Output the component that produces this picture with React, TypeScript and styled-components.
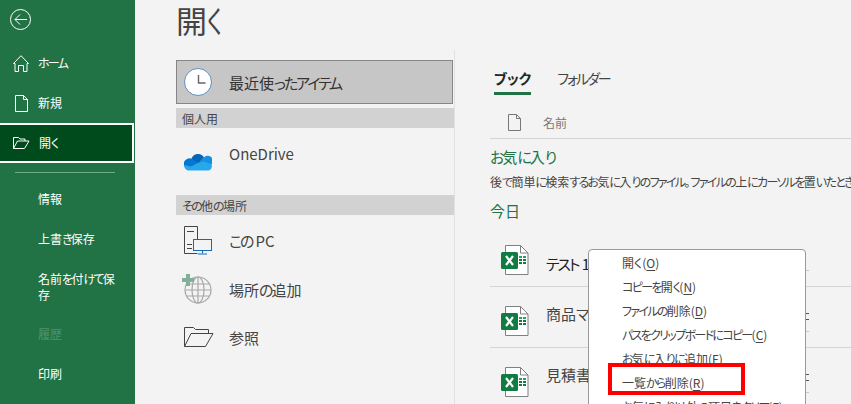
import React from "react";
import styled, { createGlobalStyle } from "styled-components";

const GlobalStyle = createGlobalStyle`
  html, body {
    margin: 0;
    padding: 0;
    background: #f3f3f3;
    overflow: hidden;
  }
  * {
    box-sizing: border-box;
  }
`;

const FONT = `"Noto Sans CJK JP", "Noto Sans", sans-serif`;

const Page = styled.div`
  position: relative;
  display: flex;
  width: 851px;
  height: 404px;
  overflow: hidden;
  background: #f3f3f3;
  font-family: ${FONT};
  font-feature-settings: "palt";
  color: #333;
`;

// the UI font of the reference has much narrower kana than kanji
const Kana = styled.span`
  letter-spacing: -0.14em;
`;

const Jp = ({ children }: { children: string }) => (
  <>{children.split(/([\u3040-\u30ff]+)/).map((part, i) => (i % 2 ? <Kana key={i}>{part}</Kana> : part))}</>
);

const Sidebar = styled.nav`
  flex: 0 0 135px;
  height: 404px;
  padding-top: 9px;
  background: #217346;
  color: #fff;
  font-size: 12px;
`;

const BackButton = styled.div`
  height: 34px;
  padding-left: 10px;
`;

const NavItem = styled.div<{ $active?: boolean; $disabled?: boolean; $tall?: boolean }>`
  display: flex;
  align-items: center;
  width: 134px;
  height: ${(p) => (p.$tall ? "55px" : "40px")};
  padding-left: 13px;
  gap: 9px;
  line-height: 16px;
  color: ${(p) => (p.$disabled ? "#4f9470" : "#fff")};
  ${(p) =>
    p.$active &&
    `
    margin-left: -2px;
    width: 136px;
    background: #004b1c;
    border: 2px solid #fff;
  `}
`;

const NavIcon = styled.span`
  display: flex;
  flex: 0 0 16px;
  justify-content: center;
`;

const NavLabel = styled.span`
  margin-left: 25px;
  width: 80px;
`;

const NavDivider = styled.div`
  width: 100px;
  height: 1px;
  margin: 9px 0 6px 15px;
  background: #6bab88;
`;

const Content = styled.main`
  flex: 1;
  display: flex;
  flex-direction: column;
  min-width: 0;
`;

const Title = styled.h1`
  margin: 0;
  height: 60px;
  padding: 0 0 0 41px;
  font-size: 31px;
  font-weight: 400;
  line-height: 40px;
  color: #444;
`;

const TitleKana = styled.span`
  display: inline-block;
  transform: scaleX(0.72);
  transform-origin: left center;
`;

const Columns = styled.div`
  display: flex;
  flex: 1;
  min-height: 0;
`;

const Places = styled.section`
  flex: 0 0 279px;
  margin-left: 41px;
  margin-top: -10px;
  padding-top: 10px;
  border-right: 1px solid #e1e1e1;
`;

const PlaceActive = styled.div`
  display: flex;
  align-items: center;
  width: 277px;
  height: 44px;
  padding-left: 7px;
  gap: 17px;
  font-size: 15px;
  background: #c6c6c6;
  border: 1px solid #868686;
  color: #333;
`;

const PlaceHeader = styled.div<{ $first?: boolean }>`
  display: flex;
  align-items: center;
  width: 278px;
  height: 20px;
  margin-top: ${(p) => (p.$first ? "4px" : "0")};
  padding-left: 6px;
  font-size: 12px;
  color: #444;
  background: #d2d2d2;
`;

const PlaceRow = styled.div<{ $h: number }>`
  display: flex;
  align-items: center;
  height: ${(p) => p.$h}px;
  padding-left: 8px;
  gap: 17px;
  font-size: 15px;
  color: #444;
`;

const PlaceIcon = styled.span<{ $outdent?: boolean }>`
  display: flex;
  flex: 0 0 28px;
  min-width: 0;

  svg {
    flex: none;
    margin-left: ${(p) => (p.$outdent ? "-2px" : "0")};
  }
`;

const RaisedLabel = styled.span`
  margin-bottom: 16px;
`;

const Files = styled.section`
  flex: 1;
  min-width: 0;
  margin-left: 35px;
  overflow: hidden;
`;

const Tabs = styled.div`
  display: flex;
  gap: 26px;
  height: 36px;
  margin: 8px 0 0 4px;
`;

const Tab = styled.div<{ $active?: boolean }>`
  height: 27px;
  font-size: 14px;
  line-height: 20px;
  font-weight: ${(p) => (p.$active ? 700 : 400)};
  color: ${(p) => (p.$active ? "#262626" : "#444")};
  border-bottom: 3px solid ${(p) => (p.$active ? "#217346" : "transparent")};
`;

const ColumnHead = styled.div`
  display: flex;
  align-items: center;
  gap: 22px;
  height: 35px;
  padding: 3px 0 0 18px;
  font-size: 12px;
  color: #777;
  border-bottom: 1px solid #d4d4d4;
`;

const GroupTitle = styled.div<{ $top: number }>`
  margin-top: ${(p) => p.$top}px;
  font-size: 15px;
  line-height: 20px;
  color: #217346;
`;

const GroupHint = styled.div`
  margin-top: 6px;
  font-size: 12px;
  line-height: 18px;
  color: #444;
  white-space: nowrap;
`;

const FileList = styled.div`
  margin-top: 5px;
`;

const FileRow = styled.div`
  position: relative;
  display: flex;
  align-items: center;
  height: 61px;
  padding: 8px 0 0 11px;
  gap: 17px;
  border-bottom: 1px solid #d4d4d4;
  white-space: nowrap;
`;

const FileName = styled.span<{ $hovered?: boolean }>`
  font-size: 15px;
  color: ${(p) => (p.$hovered ? "#222" : "#444")};
  margin-top: ${(p) => (p.$hovered ? "6px" : "0")};
  margin-bottom: ${(p) => (p.$hovered ? "0" : "16px")};
`;

/* ends of the hidden columns that peek out from behind the menu */
const RowTicks = styled.div<{ $dark?: boolean }>`
  position: absolute;
  left: 316px;
  bottom: 15px;
  width: 3px;
  height: 1px;
  background: #c8c8c8;

  &::before,
  &::after {
    content: "";
    position: absolute;
    left: 0;
    width: 3px;
    height: 1px;
    background: ${(p) => (p.$dark ? "#555" : "transparent")};
  }
  &::before {
    bottom: 18px;
  }
  &::after {
    bottom: 12px;
  }
`;

const Menu = styled.div`
  position: absolute;
  left: 588px;
  top: 249px;
  width: 218px;
  height: 170px;
  padding-top: 1px;
  background: #fff;
  border: 1px solid #999;
  border-radius: 4px;
`;

const MenuItem = styled.div`
  height: 24px;
  padding-left: 33px;
  font-size: 12px;
  line-height: 24px;
  color: #444;
  white-space: nowrap;

  u {
    text-underline-offset: 2px;
  }
`;

const RedFrame = styled.div`
  position: absolute;
  left: 608px;
  top: 363px;
  width: 137px;
  height: 32px;
  border: 4px solid #ff0000;
`;

const BackIcon = () => (
  <svg width="22" height="22" viewBox="0 0 22 22" fill="none" stroke="#fff" strokeWidth="1">
    <circle cx="10.5" cy="10.5" r="10" />
    <path d="M17 10.5H5M10 5.5l-5 5 5 5" />
  </svg>
);

const HomeIcon = () => (
  <svg width="16" height="17" viewBox="0 0 16 17" fill="none" stroke="#fff" strokeWidth="1">
    <path d="M.5 8.5 8 .7l7.5 7.8H14v8h-3.5v-6h-5v6H2v-8z" />
  </svg>
);

const DocIcon = ({ color }: { color: string }) => (
  <svg width="13" height="17" viewBox="0 0 13 17" fill="none" stroke={color} strokeWidth="1">
    <path d="M.5.5h8l4 4v12H.5z" />
    <path d="M8.5.5v4h4" />
  </svg>
);

const OpenIcon = () => (
  <svg width="17" height="12" viewBox="0 0 17 12" fill="none" stroke="#fff" strokeWidth="1">
    <path d="M.5 11.5V.5h5l1.5 1.5h5V4" />
    <path d="M.5 11.5h11L16 4H4.5L.5 11.5z" />
  </svg>
);

const ClockIcon = () => (
  <svg width="28" height="28" viewBox="0 0 28 28">
    <circle cx="14" cy="14" r="13.5" fill="#fff" stroke="#5a8fc8" />
    <path d="M14.5 7v8h7" fill="none" stroke="#666" strokeWidth="1.4" />
  </svg>
);

const CloudIcon = () => (
  <svg width="28" height="19" viewBox="0 0 28 19">
    <path d="M7.5 7A6.8 6.8 0 0 1 20 5.5L14 12z" fill="#0364b8" />
    <path d="M0 14A6 6 0 0 1 7.5 6.5L14 11l-9 6z" fill="#0078d4" />
    <path d="M19.5 6A5 5 0 0 1 28 12l-9 2-5-3z" fill="#1490df" />
    <path d="M.1 13c0 3.500 2.400 5.500 4.900 5.500h19c2 0 3.600-1.500 3.900-4 .1-.8 0-1.600-.3-2.300L20 9.500 14 11l-7 3.500z" fill="#28a8ea" />
  </svg>
);

const PcIcon = () => (
  <svg width="28" height="29" viewBox="0 0 28 29" fill="none">
    <path d="M13.5 13V.5H.5v27h13" stroke="#444" />
    <path d="M3 5.5h7M3 18.5h5M3 22.5h5" stroke="#444" />
    <rect x="9.5" y="13.5" width="18" height="11" stroke="#0f6cbd" fill="#f3f3f3" />
    <path d="M18.5 24.5v3M14 28h9" stroke="#0f6cbd" />
  </svg>
);

const GlobeIcon = () => (
  <svg width="30" height="30" viewBox="0 0 30 30" fill="none">
    <circle cx="16" cy="16" r="13" stroke="#a8a8a8" strokeWidth="1.2" />
    <ellipse cx="16" cy="16" rx="6" ry="13" stroke="#a8a8a8" strokeWidth="1.2" />
    <path d="M3 16h26M5 10h22M5 22h22M16 3v26" stroke="#a8a8a8" strokeWidth="1.2" />
    <path d="M4 0h4v4h4v4H8v4H4V8H0V4h4z" fill="#7fb09a" />
  </svg>
);

const FolderIcon = () => (
  <svg width="30" height="20" viewBox="0 0 30 20" fill="none" stroke="#444">
    <path d="M.5 19.5V.5h9l2 2h13v4" />
    <path d="M.5 19.5h21L29 6.5H7L.5 19.5z" />
  </svg>
);

const ExcelIcon = () => (
  <svg width="28" height="30" viewBox="0 0 28 30">
    <path d="M4.5 7V.5h15l7.5 7.5v21.5H4.5V24" fill="#fff" stroke="#808080" />
    <path d="M19.5.5V8H27" fill="none" stroke="#808080" />
    <rect x="0" y="7" width="17" height="17" rx="1.5" fill="#107c41" />
    <path d="M5 11l7 9M12 11l-7 9" stroke="#fff" strokeWidth="2.2" />
    <path d="M18 11h3v2h-3zM22 11h3v2h-3z" fill="#21a366" />
    <path d="M18 14h3v2h-3zM22 14h3v2h-3zM18 17h3v2h-3zM22 17h3v2h-3z" fill="#107c41" />
  </svg>
);

const App: React.FC = () => {
  return (
    <Page>
      <GlobalStyle />
      <Sidebar>
        <BackButton>
          <BackIcon />
        </BackButton>
        <NavItem>
          <NavIcon>
            <HomeIcon />
          </NavIcon>
          <span><Jp>ホーム</Jp></span>
        </NavItem>
        <NavItem>
          <NavIcon>
            <DocIcon color="#fff" />
          </NavIcon>
          <span>新規</span>
        </NavItem>
        <NavItem $active>
          <NavIcon>
            <OpenIcon />
          </NavIcon>
          <span>開く</span>
        </NavItem>
        <NavDivider />
        <NavItem>
          <NavLabel>情報</NavLabel>
        </NavItem>
        <NavItem>
          <NavLabel><Jp>上書き保存</Jp></NavLabel>
        </NavItem>
        <NavItem $tall>
          <NavLabel><Jp>名前を付けて保存</Jp></NavLabel>
        </NavItem>
        <NavItem $disabled>
          <NavLabel>履歴</NavLabel>
        </NavItem>
        <NavItem>
          <NavLabel>印刷</NavLabel>
        </NavItem>
      </Sidebar>
      <Content>
        <Title>開<TitleKana>く</TitleKana></Title>
        <Columns>
          <Places>
            <PlaceActive>
              <PlaceIcon>
                <ClockIcon />
              </PlaceIcon>
              <span><Jp>最近使ったアイテム</Jp></span>
            </PlaceActive>
            <PlaceHeader $first>個人用</PlaceHeader>
            <PlaceRow $h={67}>
              <PlaceIcon>
                <CloudIcon />
              </PlaceIcon>
              <RaisedLabel>OneDrive</RaisedLabel>
            </PlaceRow>
            <PlaceHeader><span><Jp>その他の場所</Jp></span></PlaceHeader>
            <PlaceRow $h={50}>
              <PlaceIcon>
                <PcIcon />
              </PlaceIcon>
              <span><Jp>この</Jp> PC</span>
            </PlaceRow>
            <PlaceRow $h={48}>
              <PlaceIcon $outdent>
                <GlobeIcon />
              </PlaceIcon>
              <span><Jp>場所の追加</Jp></span>
            </PlaceRow>
            <PlaceRow $h={48}>
              <PlaceIcon>
                <FolderIcon />
              </PlaceIcon>
              <span>参照</span>
            </PlaceRow>
          </Places>
          <Files>
            <Tabs>
              <Tab $active>ブック</Tab>
              <Tab><Jp>フォルダー</Jp></Tab>
            </Tabs>
            <ColumnHead>
              <DocIcon color="#777" />
              <span>名前</span>
            </ColumnHead>
            <GroupTitle $top={8}><Jp>お気に入り</Jp></GroupTitle>
            <GroupHint><Jp>後で簡単に検索するお気に入りのファイル。ファイルの上にカーソルを置いたときに表示されるピンアイコンをクリックします。</Jp></GroupHint>
            <GroupTitle $top={10}>今日</GroupTitle>
            <FileList>
              <FileRow>
                <ExcelIcon />
                <FileName $hovered><Jp>テスト</Jp> 1</FileName>
                <RowTicks />
              </FileRow>
              <FileRow>
                <ExcelIcon />
                <FileName><Jp>商品マスタ</Jp></FileName>
                <RowTicks $dark />
              </FileRow>
              <FileRow>
                <ExcelIcon />
                <FileName>見積書</FileName>
                <RowTicks $dark />
              </FileRow>
            </FileList>
          </Files>
        </Columns>
      </Content>
      <Menu>
        <MenuItem>開く(<u>O</u>)</MenuItem>
        <MenuItem><Jp>コピーを開く(</Jp><u>N</u>)</MenuItem>
        <MenuItem><Jp>ファイルの削除(</Jp><u>D</u>)</MenuItem>
        <MenuItem><Jp>パスをクリップボードにコピー(</Jp><u>C</u>)</MenuItem>
        <MenuItem><Jp>お気に入りに追加(</Jp><u>F</u>)</MenuItem>
        <MenuItem><Jp>一覧から削除(</Jp><u>R</u>)</MenuItem>
        <MenuItem><Jp>お気に入り以外の項目をクリア(</Jp><u>F</u>)</MenuItem>
      </Menu>
      <RedFrame />
    </Page>
  );
};

export default App;
